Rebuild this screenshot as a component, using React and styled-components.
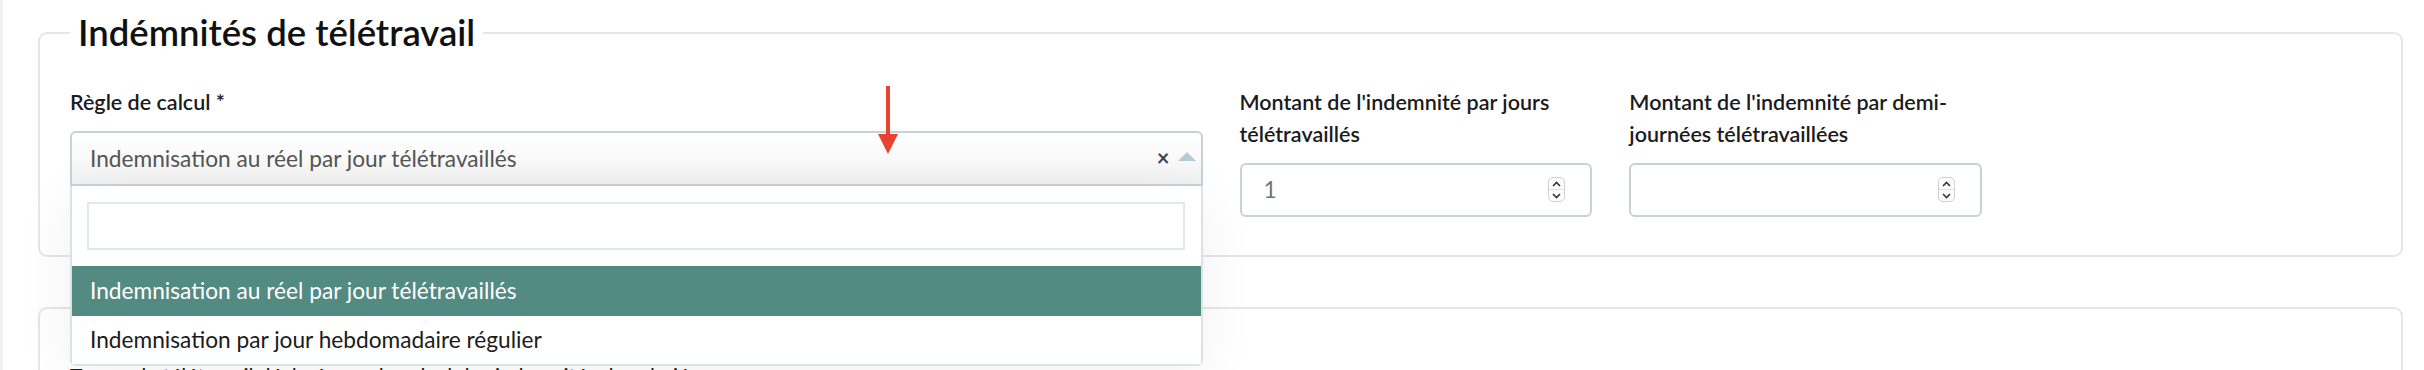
import React from 'react';
import styled, { createGlobalStyle } from 'styled-components';

const GlobalStyle = createGlobalStyle`
  body {
    margin: 0;
    background: #fff;
    font-family: Lato, "Noto Sans", sans-serif;
    color: #1b1b1b;
  }
  * {
    box-sizing: border-box;
  }
`;

const Page = styled.div`
  position: relative;
  height: 370px;
  overflow: hidden;
  padding: 12px 21px 0 35px;
  border-left: 3px solid #f1f1f1;
`;

const Fieldset = styled.fieldset`
  margin: 0 0 50px;
  padding: ${(p) => (p.$plain ? '52px' : '32px')} 29px 38px 30px;
  border: 2px solid #e6e6e6;
  border-radius: 9px;
  min-width: 0;
`;

const Legend = styled.legend`
  padding: 0 8px;
  font-size: 36.5px;
  font-weight: 600;
  line-height: 1.15;
  color: #111;
`;

const Grid = styled.div`
  display: grid;
  grid-template-columns: repeat(12, minmax(0, 1fr));
  column-gap: 37px;
  align-items: start;
`;

const Field = styled.div`
  grid-column: span ${(p) => p.$span};
  display: flex;
  flex-direction: column;
  position: relative;
`;

const Label = styled.label`
  font-size: 21.5px;
  font-weight: 600;
  line-height: 32px;
  margin-bottom: 13px;
  color: #1b1b1b;
`;

const SelectWrap = styled.div`
  position: relative;
`;

const SelectBox = styled.div`
  height: 55px;
  display: flex;
  align-items: center;
  padding: 0 5px 0 18px;
  border: 2px solid #cbd0d5;
  border-radius: 6px 6px 0 0;
  background: linear-gradient(#fff 0%, #fafafa 50%, #f1f1f1 100%);
  font-size: 22.7px;
  color: #555;
`;

const SelectValue = styled.span`
  flex: 1;
`;

const Clear = styled.span`
  font-size: 22px;
  font-weight: 700;
  color: #444;
  margin-right: 8px;
  line-height: 1;
`;

const Caret = styled.span`
  width: 0;
  height: 0;
  border-left: 9px solid transparent;
  border-right: 9px solid transparent;
  border-bottom: 9px solid #b9cad2;
  margin-top: -4px;
`;

const Dropdown = styled.div`
  position: absolute;
  top: 100%;
  left: 0;
  right: 0;
  z-index: 10;
  background: #fff;
  border: 2px solid #dde2e6;
  border-top: none;
  border-radius: 0 0 6px 6px;
  box-shadow: 0 10px 60px rgba(0, 0, 0, 0.06);
`;

const SearchWrap = styled.div`
  padding: 16px 16px 16px 15px;
`;

const Search = styled.input`
  display: block;
  width: 100%;
  height: 48px;
  border: 2px solid #e3e8eb;
  outline: none;
  font: inherit;
`;

const Option = styled.div`
  height: ${(p) => (p.$active ? '50px' : '48px')};
  display: flex;
  align-items: center;
  padding-left: 18px;
  font-size: 22.7px;
  color: ${(p) => (p.$active ? '#fff' : '#1b1b1b')};
  background: ${(p) => (p.$active ? '#538a82' : '#fff')};
`;

const NumberBox = styled.div`
  height: 54px;
  display: flex;
  align-items: center;
  padding: 0 25px 0 22px;
  border: 2px solid #cbd0d5;
  border-radius: 6px;
  font-size: 22.7px;
  color: #6c757d;
`;

const NumberValue = styled.span`
  flex: 1;
`;

const Stepper = styled.span`
  width: 17px;
  height: 25px;
  display: flex;
  flex-direction: column;
  border: 1px solid #cfcfcf;
  border-radius: 5px;
  background: #fdfdfd;
  overflow: hidden;

  span {
    flex: 1;
    display: flex;
    align-items: center;
    justify-content: center;
  }
  span + span {
    border-top: 1px solid #e2e2e2;
  }
`;

const Arrow = styled.svg`
  position: absolute;
  left: 875px;
  top: 86px;
`;

const Note = styled.p`
  margin: 0;
  font-size: 21px;
  line-height: 30px;
  color: #1b1b1b;
`;

function NumberField({ label, value }) {
  return (
    <Field $span={2}>
      <Label>{label}</Label>
      <NumberBox>
        <NumberValue>{value}</NumberValue>
        <Stepper>
          <span>
            <svg width="9" height="6" viewBox="0 0 9 6">
              <path d="M1 5 L4.5 1.5 L8 5" fill="none" stroke="#333" strokeWidth="1.6" />
            </svg>
          </span>
          <span>
            <svg width="9" height="6" viewBox="0 0 9 6">
              <path d="M1 1 L4.5 4.5 L8 1" fill="none" stroke="#333" strokeWidth="1.6" />
            </svg>
          </span>
        </Stepper>
      </NumberBox>
    </Field>
  );
}

export default function App() {
  return (
    <Page>
      <GlobalStyle />
      <Fieldset>
        <Legend>Indémnités de télétravail</Legend>
        <Grid>
          <Field $span={6}>
            <Label>Règle de calcul *</Label>
            <SelectWrap>
              <SelectBox>
                <SelectValue>Indemnisation au réel par jour télétravaillés</SelectValue>
                <Clear>×</Clear>
                <Caret />
              </SelectBox>
              <Dropdown>
                <SearchWrap>
                  <Search type="text" />
                </SearchWrap>
                <Option $active>Indemnisation au réel par jour télétravaillés</Option>
                <Option>Indemnisation par jour hebdomadaire régulier</Option>
              </Dropdown>
            </SelectWrap>
          </Field>
          <NumberField label="Montant de l'indemnité par jours télétravaillés" value="1" />
          <NumberField label="Montant de l'indemnité par demi-journées télétravaillées" value="" />
        </Grid>
      </Fieldset>
      <Fieldset $plain>
        <Note>Temps de télétravail déclaré pour le calcul des indemnités du salarié</Note>
      </Fieldset>
      <Arrow width="20" height="68" viewBox="0 0 20 68">
        <rect x="8" y="0" width="4" height="50" fill="#e8432e" />
        <polygon points="0,48 20,48 10,68" fill="#e8432e" />
      </Arrow>
    </Page>
  );
}
